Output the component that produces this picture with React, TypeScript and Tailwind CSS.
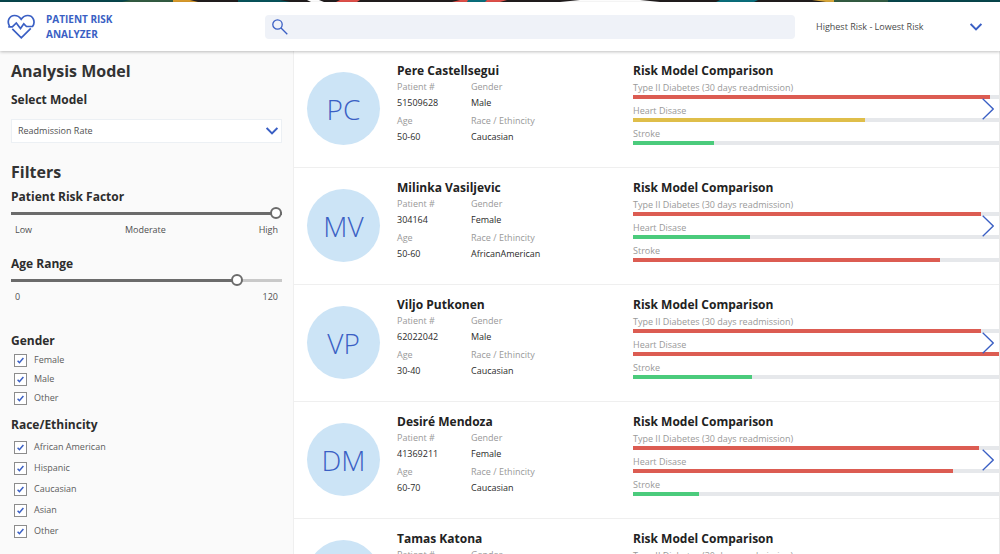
import { useState } from 'react';

type Risk = { label: string; value: number; color: string };
type Patient = { name: string; initials: string; id: string; gender: string; age: string; race: string; risks: number[] };

const patients: Patient[] = [
  { name: 'Pere Castellsegui', initials: 'PC', id: '51509628', gender: 'Male', age: '50-60', race: 'Caucasian', risks: [97.5, 63.5, 22] },
  { name: 'Milinka Vasiljevic', initials: 'MV', id: '304164', gender: 'Female', age: '50-60', race: 'AfricanAmerican', risks: [95, 32, 84] },
  { name: 'Viljo Putkonen', initials: 'VP', id: '62022042', gender: 'Male', age: '30-40', race: 'Caucasian', risks: [95, 100, 32.5] },
  { name: 'Desiré Mendoza', initials: 'DM', id: '41369211', gender: 'Female', age: '60-70', race: 'Caucasian', risks: [94.5, 87.5, 18] },
  { name: 'Tamas Katona', initials: 'TK', id: '58120347', gender: 'Male', age: '40-50', race: 'Caucasian', risks: [94, 60, 30] },
];

const riskNames = ['Type II Diabetes (30 days readmission)', 'Heart Disase', 'Stroke'];

function toRisk(value: number, i: number): Risk {
  const color = value > 80 ? 'bg-[#dc5c52]' : value > 50 ? 'bg-[#dfbe4a]' : 'bg-[#4bcb7c]';
  return { label: riskNames[i], value, color };
}

function Chevron() {
  return (
    <svg className="pointer-events-none h-2 w-3" viewBox="0 0 12 8" fill="none" stroke="#3a5fc4" strokeWidth="2" aria-hidden="true">
      <path d="M0.6 1 6 6.4 11.4 1" />
    </svg>
  );
}

function TopStrip() {
  return (
    <svg className="block h-[2px] w-full shrink-0" viewBox="0 0 1000 2" preserveAspectRatio="none" aria-hidden="true">
      <rect width="1000" height="2" fill="#211d1e" />
      <path d="M0 0H143L138 2H0z" fill="#07464c" />
      <path d="M130 0H173V2H122z" fill="#335c42" />
      <path d="M173 0H190L198 2H173z" fill="#d99a2b" />
      <path d="M238 0H280L290 2H238z" fill="#08535b" />
      <path d="M307 0H319L324 2H311z" fill="#fff" />
      <path d="M340 0H360L357 2H336z" fill="#e0504a" />
      <path d="M460 0H507L500 2H452z" fill="#e0504a" />
      <path d="M468 0H487L485 2H467z" fill="#0a6f7d" />
      <path d="M580 0H640L660 2H560z" fill="#fff" />
      <path d="M720 0H758L754 2H716z" fill="#0a6f7d" />
      <path d="M812 0H834V2H826z" fill="#d9a83b" />
      <path d="M834 0H888V2H834z" fill="#335c42" />
      <path d="M888 0H1000V2H888z" fill="#07464c" />
    </svg>
  );
}

function Slider({ id, title, initial, max, marks }: { id: string; title: string; initial: number; max: number; marks: string[] }) {
  const [value, setValue] = useState(initial);
  const pct = (value / max) * 100;
  return (
    <div>
      <label htmlFor={id} className="block text-xs leading-4 font-bold text-[#2d2d2d]">{title}</label>
      <input
        id={id}
        type="range"
        min={0}
        max={max}
        value={value}
        onChange={(e) => setValue(Number(e.target.value))}
        style={{ backgroundImage: `linear-gradient(to right, #6b6b6b ${pct}%, #c9c9c9 ${pct}%)` }}
        className="mt-[2px] block h-3 w-full appearance-none bg-[length:100%_3px] bg-center bg-no-repeat [&::-webkit-slider-thumb]:size-3 [&::-webkit-slider-thumb]:appearance-none [&::-webkit-slider-thumb]:rounded-full [&::-webkit-slider-thumb]:border-2 [&::-webkit-slider-thumb]:border-[#6b6b6b] [&::-webkit-slider-thumb]:bg-white"
      />
      <div className="mt-[3px] flex justify-between px-1 text-[9px] leading-4 text-[#505050]">
        {marks.map((m) => <span key={m}>{m}</span>)}
      </div>
    </div>
  );
}

function CheckGroup({ title, options, list }: { title: string; options: string[]; list: string }) {
  return (
    <fieldset>
      <legend className="text-xs leading-4 font-bold text-[#2d2d2d]">{title}</legend>
      <div className={list}>
        {options.map((o) => (
          <label key={o} className="flex items-center gap-[7px] pl-[3px] text-[9px] leading-[14px] text-[#5c5c5c]">
            <span className="grid size-[13px] place-items-center">
              <input type="checkbox" defaultChecked className="peer col-start-1 row-start-1 size-[13px] appearance-none border border-[#8c8c8c] bg-white" />
              <svg className="pointer-events-none col-start-1 row-start-1 hidden size-[7px] peer-checked:block" viewBox="0 0 7 7" fill="none" stroke="#3a5fc4" strokeWidth="1.5" aria-hidden="true">
                <path d="M0.6 3.8 2.4 5.7 6.4 0.9" />
              </svg>
            </span>
            {o}
          </label>
        ))}
      </div>
    </fieldset>
  );
}

function Fact({ label, value }: { label: string; value: string }) {
  return (
    <div>
      <dt className="leading-4 text-[#999]">{label}</dt>
      <dd className="leading-[15px] text-[#2b2b2b]">{value}</dd>
    </div>
  );
}

function PatientRow({ p }: { p: Patient }) {
  return (
    <li className="relative flex border-b border-[#efefef] pt-3 pb-[17px] pl-[13px]">
      <div className="mt-[9px] grid size-[73px] shrink-0 place-items-center rounded-full bg-[#cce4f6] text-[28px] font-light text-[#3a5fc4]">
        {p.initials}
      </div>
      <div className="ml-[17px] w-[236px] shrink-0">
        <h3 className="text-xs leading-4 font-bold text-[#222]">{p.name}</h3>
        <dl className="grid grid-cols-[74px_1fr] gap-y-[3px] text-[9px]">
          <Fact label="Patient #" value={p.id} />
          <Fact label="Gender" value={p.gender} />
          <Fact label="Age" value={p.age} />
          <Fact label="Race / Ethincity" value={p.race} />
        </dl>
      </div>
      <div className="min-w-0 flex-1">
        <h3 className="text-xs leading-4 font-bold text-[#222]">Risk Model Comparison</h3>
        <div className="pt-[2px] text-[9px] text-[#999]">
          {p.risks.map(toRisk).map((r) => (
            <div key={r.label} className="pb-[5px]">
              <div className="leading-[14px]">{r.label}</div>
              <div className="h-1 bg-[#e6e8eb]">
                <div className={`h-full ${r.color}`} style={{ width: `${r.value}%` }} />
              </div>
            </div>
          ))}
        </div>
      </div>
      <button type="button" aria-label={`Open ${p.name}`} className="absolute top-[47px] right-[5px]">
        <svg className="block h-[22px] w-3" viewBox="0 0 12 22" fill="none" stroke="#3a5fc4" strokeWidth="1.3" aria-hidden="true">
          <path d="M0.7 0.8 11.2 11 0.7 21.2" />
        </svg>
      </button>
    </li>
  );
}

export default function App() {
  return (
    <div className="flex h-screen flex-col overflow-hidden bg-white font-['Open_Sans',sans-serif]">
      <TopStrip />
      <header className="relative flex h-[49px] shrink-0 items-center bg-white pr-[18px] pl-[7px] shadow-[0_1px_3px_rgba(0,0,0,0.25)]">
        <svg className="h-[25px] w-7" viewBox="0 0 28 25" fill="none" stroke="#3a5fc4" strokeWidth="1.7" aria-hidden="true">
          <path d="M2.5 12.2C-0.5 7 2.5 1.5 7.5 1.5c3 0 5 1.3 6.7 3.8C16 2.8 18 1.5 20.7 1.5c5.8 0 8 6.700 4.800 11H19.500L16.800 9.800l-3.300 4.700L9.300 9 5.300 12.800H1.200M5.300 14.800l9 9 9.500-9.500" />
        </svg>
        <h1 className="ml-[11px] w-[219px] text-[10px] leading-[15px] font-bold text-[#3a5fc4]">PATIENT RISK<br />ANALYZER</h1>
        <label className="flex h-6 flex-1 items-center rounded bg-[#eff2f8] pl-[7px]">
          <svg className="size-4" viewBox="0 0 16 16" fill="none" stroke="#3a5fc4" strokeWidth="1.3" aria-hidden="true">
            <circle cx="5.5" cy="5.5" r="4.7" />
            <path d="m8.8 8.8 6.5 6.5" />
          </svg>
          <input type="search" aria-label="Search patients" className="h-full min-w-0 flex-1 bg-transparent px-2 text-[10px] outline-none" />
        </label>
        <div className="ml-[21px] grid w-[166px] items-center">
          <select aria-label="Sort order" className="col-start-1 row-start-1 w-full appearance-none bg-transparent text-[9px] text-[#4a4a4a]">
            <option>Highest Risk - Lowest Risk</option>
            <option>Lowest Risk - Highest Risk</option>
          </select>
          <div className="pointer-events-none col-start-1 row-start-1 justify-self-end"><Chevron /></div>
        </div>
      </header>
      <div className="flex min-h-0 flex-1">
        <aside className="w-[294px] shrink-0 border-r border-[#efefef] bg-[#fafafa] pt-[10px] pr-[11px] pl-[11px]">
          <h2 className="text-base leading-5 font-bold text-[#333]">Analysis Model</h2>
          <label htmlFor="model" className="mt-[11px] block text-xs leading-4 font-bold text-[#2d2d2d]">Select Model</label>
          <div className="mt-[11px] grid items-center">
            <select id="model" className="col-start-1 row-start-1 h-6 w-full appearance-none border border-[#ecf0f4] bg-white pl-[6px] text-[9px] text-[#505050]">
              <option>Readmission Rate</option>
            </select>
            <div className="pointer-events-none col-start-1 row-start-1 mr-1 justify-self-end"><Chevron /></div>
          </div>
          <h2 className="mt-[19px] mb-[7px] text-base leading-5 font-bold text-[#333]">Filters</h2>
          <Slider id="risk" title="Patient Risk Factor" initial={100} max={100} marks={['Low', 'Moderate', 'High']} />
          <div className="mt-[18px]">
            <Slider id="age" title="Age Range" initial={102} max={120} marks={['0', '120']} />
          </div>
          <div className="mt-7">
            <CheckGroup title="Gender" options={['Female', 'Male', 'Other']} list="grid gap-[5px] pt-1" />
          </div>
          <div className="mt-3">
            <CheckGroup title="Race/Ethincity" options={['African American', 'Hispanic', 'Caucasian', 'Asian', 'Other']} list="grid gap-[7px] pt-[7px]" />
          </div>
        </aside>
        <main className="min-w-0 flex-1 overflow-hidden border-r border-[#e8e8e8]">
          <ul>
            {patients.map((p) => <PatientRow key={p.id} p={p} />)}
          </ul>
        </main>
      </div>
    </div>
  );
}
